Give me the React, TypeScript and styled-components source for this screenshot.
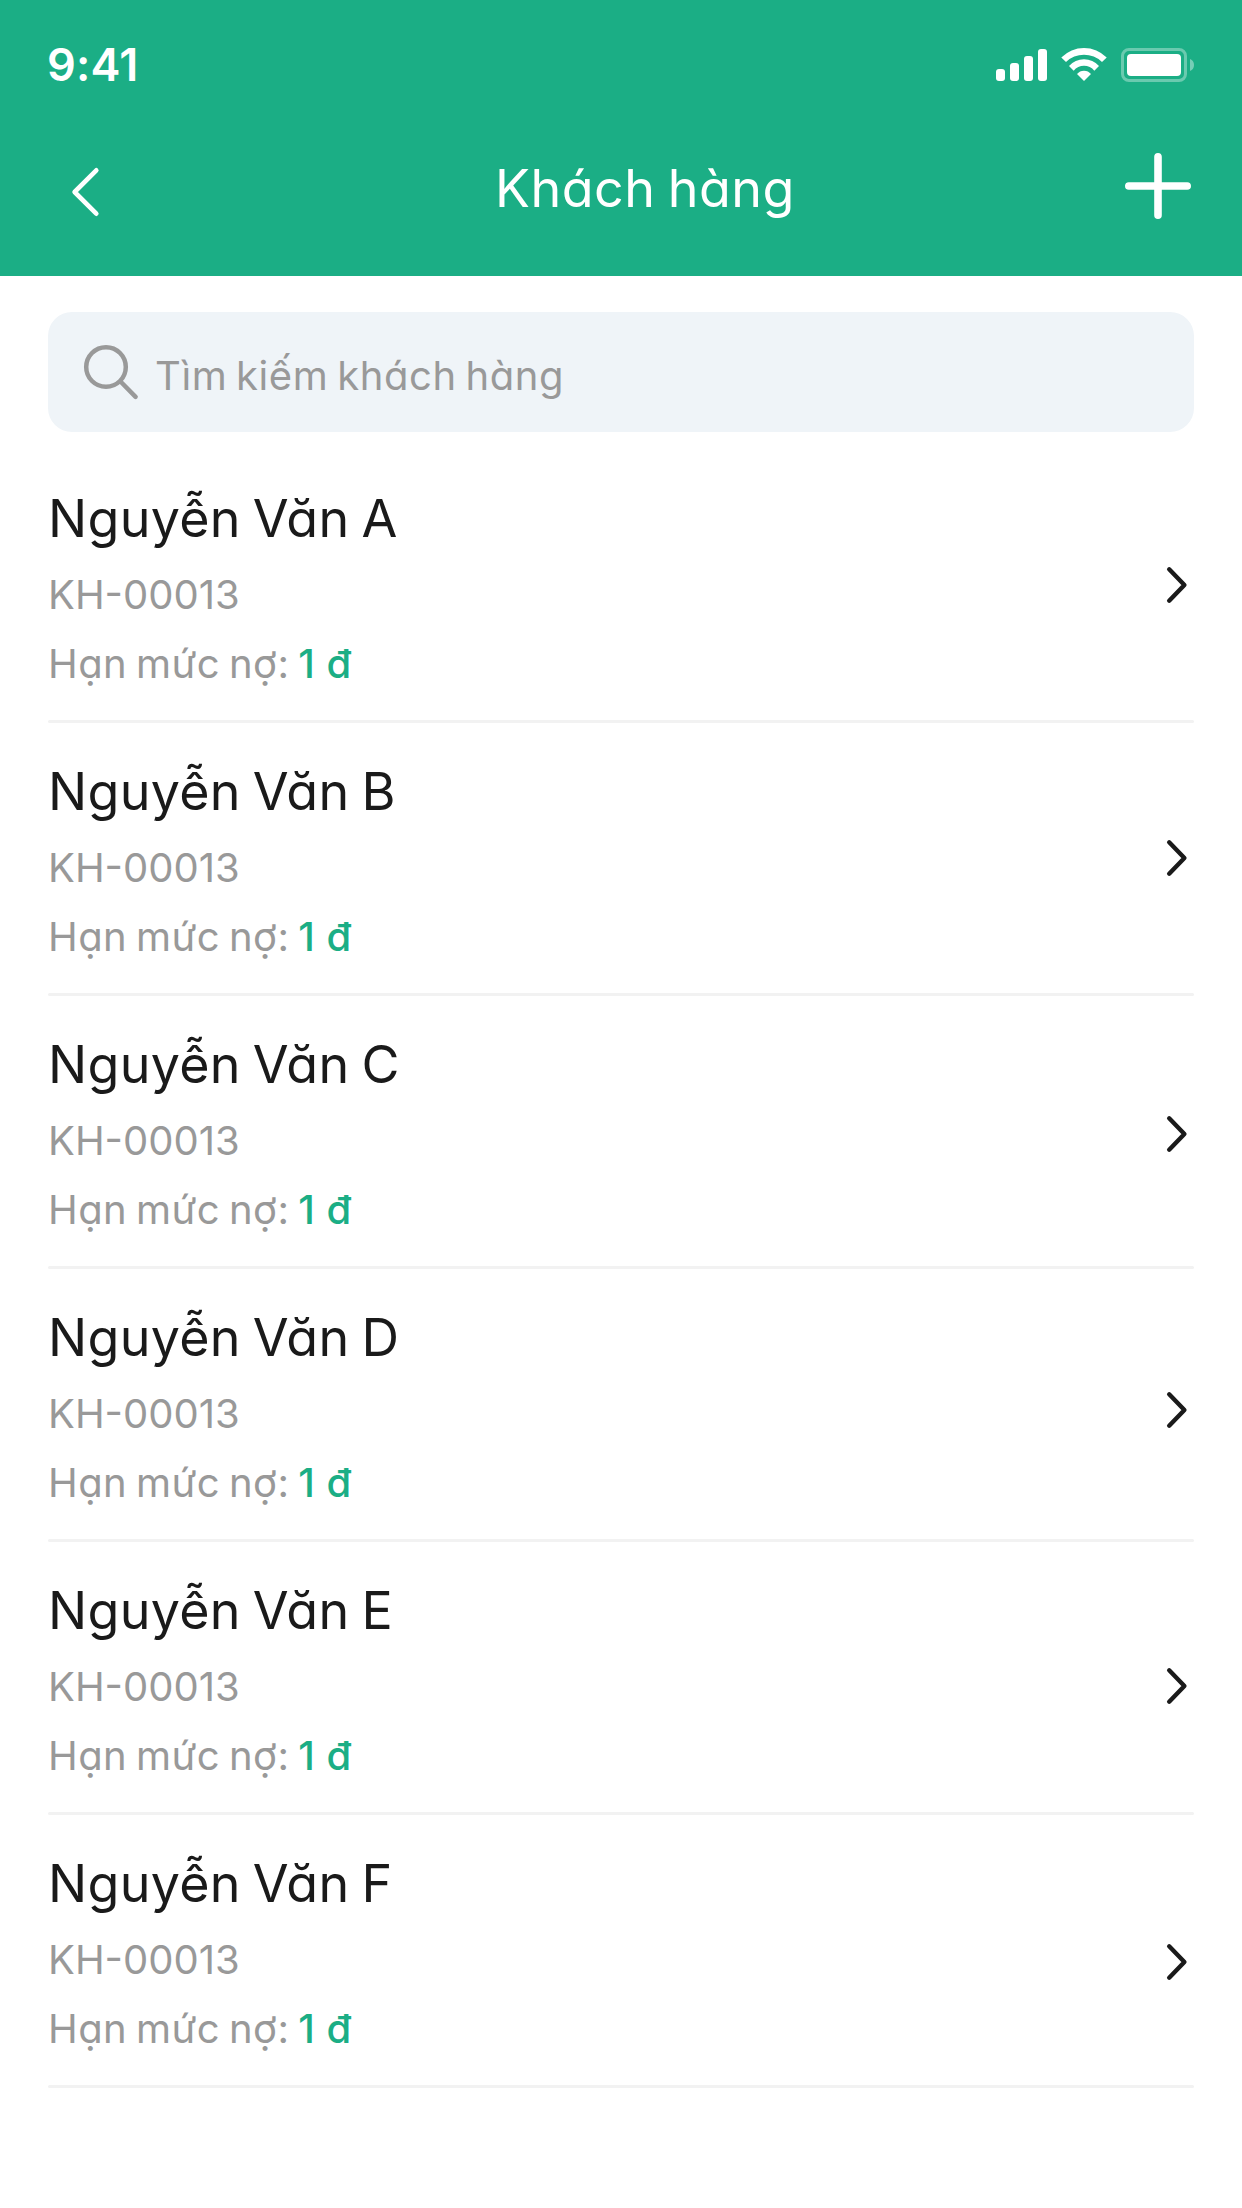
import React from "react";
import styled, { createGlobalStyle } from "styled-components";

const green = "#1bae85";
const ink = "#1a1a1a";
const grey = "#999999";

const GlobalStyle = createGlobalStyle`
  body {
    margin: 0;
    background: #ffffff;
    font-family: Inter, "Noto Sans", sans-serif;
    font-feature-settings: "cv11";
  }
`;

const Screen = styled.div`
  width: 1242px;
  height: 2208px;
  overflow: hidden;
  background: #ffffff;
`;

const Header = styled.header`
  height: 276px;
  background: ${green};
  color: #ffffff;
`;

const StatusBar = styled.div`
  display: flex;
  justify-content: space-between;
  align-items: flex-start;
  height: 132px;
  box-sizing: border-box;
  padding: 37px 48px 0 47px;
`;

const Clock = styled.time`
  padding-top: 1px;
  font-size: 45px;
  line-height: 54px;
  font-weight: 580;
  letter-spacing: 0.2px;
`;

const StatusIcons = styled.div`
  display: flex;
  gap: 14px;
  padding-top: 11px;
`;

const NavBar = styled.nav`
  display: flex;
  align-items: flex-start;
  justify-content: space-between;
  padding: 21px 51px 0 72px;
`;

const IconButton = styled.button<{ $top?: number }>`
  display: flex;
  padding: 0;
  margin-top: ${(p) => p.$top ?? 0}px;
  border: 0;
  background: none;
  color: inherit;
`;

const Title = styled.h1`
  margin: 6px 0 0 15px;
  flex: 1;
  padding-left: 51px;
  text-align: center;
  font-size: 52px;
  line-height: 60px;
  font-weight: 440;
  letter-spacing: 0.5px;
  word-spacing: -3px;
`;

const Icon = styled.svg`
  display: block;
  flex: none;
  overflow: visible;
`;

const SearchBox = styled.label`
  display: flex;
  align-items: flex-start;
  height: 120px;
  margin: 36px 48px 18px;
  box-sizing: border-box;
  padding: 33px 32px 0 36px;
  border-radius: 24px;
  background: #eff4f8;
  color: ${grey};
`;

const Placeholder = styled.span`
  margin: 6px 0 0 17px;
  font-size: 40px;
  line-height: 50px;
  font-weight: 430;
  letter-spacing: 0.57px;
  word-spacing: -3px;
  white-space: nowrap;
`;

const List = styled.ul`
  margin: 0;
  padding: 0 48px;
  list-style: none;
`;

const Item = styled.li`
  height: 273px;
  display: flex;
  flex-direction: column;
`;

const ItemBody = styled.div`
  flex: 1;
  display: flex;
  justify-content: space-between;
  align-items: flex-start;
  padding-right: 7px;
`;

const Details = styled.div`
  display: flex;
  flex-direction: column;
  padding-top: 39px;
`;

const Name = styled.span`
  color: ${ink};
  font-size: 52px;
  line-height: 60px;
  font-weight: 430;
  letter-spacing: 0.3px;
  word-spacing: -3px;
`;

const Code = styled.span`
  margin-top: 21px;
  color: ${grey};
  font-size: 40px;
  line-height: 50px;
  font-weight: 430;
`;

const Limit = styled.span`
  margin-top: 19px;
  color: ${grey};
  font-size: 40px;
  line-height: 50px;
  font-weight: 430;
  letter-spacing: 0.45px;
  word-spacing: -2.8px;
`;

const Amount = styled.span`
  color: ${green};
  font-weight: 500;
  word-spacing: 0;
`;

const ChevronSlot = styled.div<{ $top: number }>`
  padding-top: ${(p) => p.$top}px;
`;

const Divider = styled.div`
  height: 3px;
  border-radius: 1.5px;
  background: #f2f2f2;
`;

const Signal = () => (
  <Icon width="51" height="34" viewBox="0 0 51 34" fill="#fff">
    <rect x="0" y="21" width="9" height="12" rx="3" />
    <rect x="14" y="15" width="9" height="18" rx="3" />
    <rect x="28" y="8" width="9" height="25" rx="3" />
    <rect x="42" y="1" width="9" height="32" rx="3" />
  </Icon>
);

const Wifi = () => (
  <Icon width="46" height="34" viewBox="0 0 46 34" fill="#fff">
    <path d="M0.3 9.5A31.9 31.9 0 0 1 45.7 9.5L41 14A25.8 25.8 0 0 0 5 14Z" />
    <path d="M8 18A20.1 20.1 0 0 1 38 18L33.3 22.7A13.1 13.1 0 0 0 12.7 22.7Z" />
    <path d="M16 26A9 9 0 0 1 30 26L23 33Z" />
  </Icon>
);

const Battery = () => (
  <Icon width="73" height="34" viewBox="0 0 73 34" fill="#fff">
    <rect x="1.5" y="1.5" width="63" height="31" rx="6.5" fill="none" stroke="#fff" strokeWidth="3" opacity="0.35" />
    <rect x="6" y="6" width="54" height="22" rx="4" />
    <path d="M69 11A6.5 6.5 0 0 1 69 23Z" opacity="0.4" />
  </Icon>
);

const stroke = {
  fill: "none",
  stroke: "currentColor",
  strokeLinecap: "round" as const,
  strokeLinejoin: "round" as const,
};

const Back = () => (
  <Icon width="27" height="48" viewBox="0 0 27 48" {...stroke} strokeWidth="4.6">
    <path d="M24.3 2.3L2.6 24L24.3 45.7" />
  </Icon>
);

const Plus = () => (
  <Icon width="66" height="66" viewBox="0 0 66 66" {...stroke} strokeWidth="7.6">
    <path d="M33 3.8V62.2M3.8 33H62.2" />
  </Icon>
);

const Magnifier = () => (
  <Icon width="54" height="54" viewBox="0 0 54 54" {...stroke} strokeWidth="4.5">
    <circle cx="22" cy="22" r="19.8" />
    <path d="M36.5 36.5L51.6 51.8" />
  </Icon>
);

const Chevron = () => (
  <Icon width="20" height="36" viewBox="0 0 20 36" {...stroke} stroke={ink} strokeWidth="4.4">
    <path d="M2.2 2.3L17.4 18L2.2 33.7" />
  </Icon>
);

const customers = ["A", "B", "C", "D", "E", "F"].map((letter, i) => ({
  name: `Nguyễn Văn ${letter}`,
  code: "KH-00013",
  limit: "1 đ",
  chevronTop: 117 + 3 * Math.max(0, i - 1),
}));

export default function App() {
  return (
    <Screen>
      <GlobalStyle />
      <Header>
        <StatusBar>
          <Clock>9:41</Clock>
          <StatusIcons>
            <Signal />
            <Wifi />
            <Battery />
          </StatusIcons>
        </StatusBar>
        <NavBar>
          <IconButton $top={15} aria-label="Quay lại">
            <Back />
          </IconButton>
          <Title>Khách hàng</Title>
          <IconButton aria-label="Thêm">
            <Plus />
          </IconButton>
        </NavBar>
      </Header>
      <SearchBox>
        <Magnifier />
        <Placeholder>Tìm kiếm khách hàng</Placeholder>
      </SearchBox>
      <List>
        {customers.map((c) => (
          <Item key={c.name}>
            <ItemBody>
              <Details>
                <Name>{c.name}</Name>
                <Code>{c.code}</Code>
                <Limit>
                  Hạn mức nợ: <Amount>{c.limit}</Amount>
                </Limit>
              </Details>
              <ChevronSlot $top={c.chevronTop}>
                <Chevron />
              </ChevronSlot>
            </ItemBody>
            <Divider />
          </Item>
        ))}
      </List>
    </Screen>
  );
}
